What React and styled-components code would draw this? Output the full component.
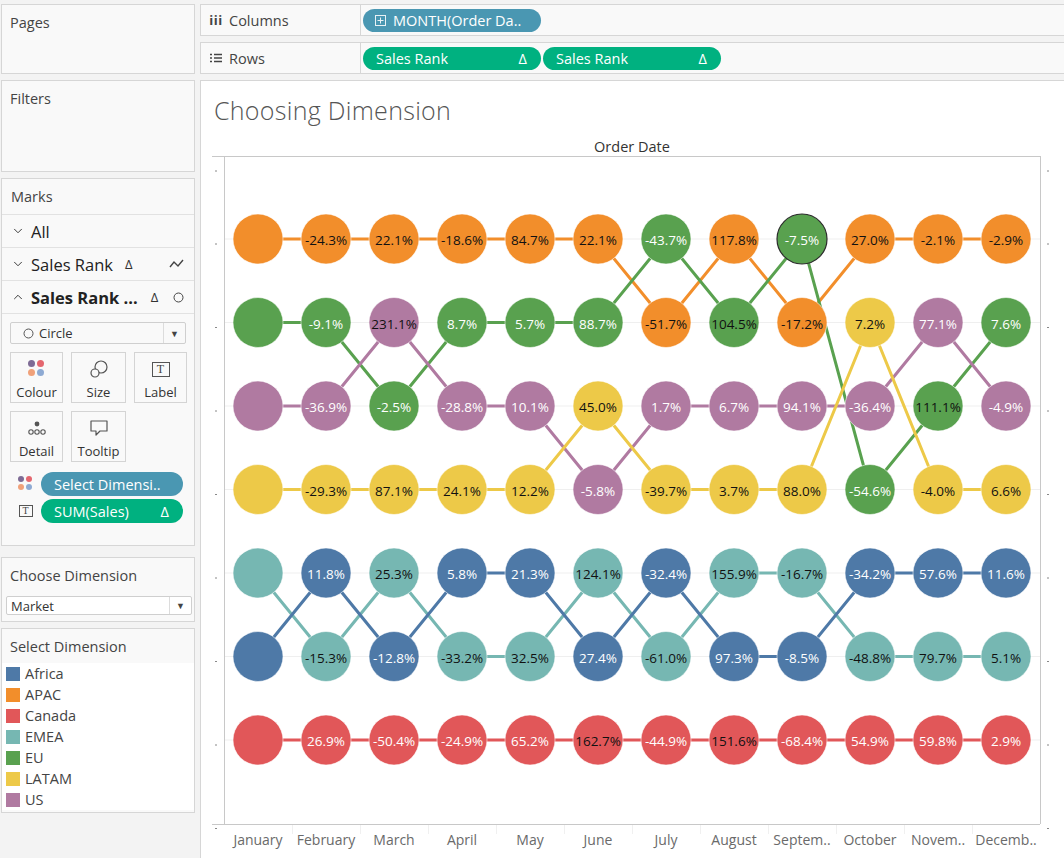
import React from "react"
import styled, { createGlobalStyle } from "styled-components"
import { ChevronDown, ChevronUp } from "lucide-react"

const GlobalStyle = createGlobalStyle`
  html, body {
    margin: 0;
    padding: 0;
    overflow: hidden;
    background: #f3f3f3;
  }
  body {
    font-family: "Open Sans", "Liberation Sans", sans-serif;
    color: #333;
  }
`;

const COLORS = {
  A: "#4e79a7", // Africa
  P: "#f28e2b", // APAC
  C: "#e15759", // Canada
  E: "#76b7b2", // EMEA
  U: "#59a14f", // EU
  L: "#edc948", // LATAM
  S: "#b07aa1", // US
};

const LEGEND = [
  ["Africa", "A"], ["APAC", "P"], ["Canada", "C"], ["EMEA", "E"],
  ["EU", "U"], ["LATAM", "L"], ["US", "S"],
];

const MONTHS = ["January", "February", "March", "April", "May", "June", "July",
  "August", "Septem..", "October", "Novem..", "Decemb.."];

// market per rank row, month by month
const RANKS = [
  "PPPPPPUPUPPP",
  "UUSUUUPUPLSU",
  "SSUSSLSSSSUS",
  "LLLLLSLLLULL",
  "EAEAAEAEEAAA",
  "AEAEEAEAAEEE",
  "CCCCCCCCCCCC",
];

const LABELS = [
  [null, -24.3, 22.1, -18.6, 84.7, 22.1, -43.7, 117.8, -7.5, 27.0, -2.1, -2.9],
  [null, -9.1, 231.1, 8.7, 5.7, 88.7, -51.7, 104.5, -17.2, 7.2, 77.1, 7.6],
  [null, -36.9, -2.5, -28.8, 10.1, 45.0, 1.7, 6.7, 94.1, -36.4, 111.1, -4.9],
  [null, -29.3, 87.1, 24.1, 12.2, -5.8, -39.7, 3.7, 88.0, -54.6, -4.0, 6.6],
  [null, 11.8, 25.3, 5.8, 21.3, 124.1, -32.4, 155.9, -16.7, -34.2, 57.6, 11.6],
  [null, -15.3, -12.8, -33.2, 32.5, 27.4, -61.0, 97.3, -8.5, -48.8, 79.7, 5.1],
  [null, 26.9, -50.4, -24.9, 65.2, 162.7, -44.9, 151.6, -68.4, 54.9, 59.8, 2.9],
];

const COL0 = 46;
const COLW = 68;
const ROW0 = 109;
const ROWH = 83.5;
const R = 25;

const Page = styled.div`
  display: flex;
  padding-top: 4px;
  height: 880px;
  box-sizing: border-box;
`;

const Sidebar = styled.div`
  width: 194px;
  margin-left: 1px;
  display: flex;
  flex-direction: column;
`;

const Card = styled.div`
  background: #f9f9f9;
  border: 1px solid #d6d6d6;
  box-sizing: border-box;
  height: ${p => p.$h}px;
  margin-top: ${p => p.$mt || 0}px;
`;

const CardTitle = styled.div`
  font-size: 14.5px;
  color: #444;
  padding: ${p => p.$pad || "7px 8px"};
`;

const MarksHeader = styled.div`
  font-size: 14.5px;
  color: #444;
  height: 35px;
  line-height: 35px;
  padding-left: 9px;
`;

const MarksRow = styled.div`
  display: flex;
  align-items: center;
  height: 33px;
  border-top: 1px solid #e2e2e2;
  box-sizing: border-box;
  padding: 0 10px 0 9px;
  color: #222;
`;

const RowLabel = styled.span`
  font-size: 16.5px;
  margin-left: 6px;
  font-weight: ${p => (p.$bold ? 700 : 400)};
  white-space: nowrap;
`;

const Delta = styled.span`
  font-size: 13px;
  margin-left: ${p => p.$ml}px;
  color: #333;
`;

const RowIcon = styled.span`
  margin-left: auto;
  display: flex;
  align-items: center;
`;

const MarksBody = styled.div`
  border-top: 1px solid #e2e2e2;
  padding: 8px 8px 0 8px;
`;

const Select = styled.div`
  display: flex;
  align-items: center;
  height: ${p => p.$h || 22}px;
  background: ${p => p.$bg || "#f9f9f9"};
  border: 1px solid #cfcfcf;
  border-radius: 2px;
  box-sizing: border-box;
  font-size: 13px;
  color: #333;
`;

const SelectText = styled.span`
  flex: 1;
  display: flex;
  align-items: center;
  gap: 5px;
  padding-left: ${p => p.$pl || 12}px;
`;

const SelectArrow = styled.span`
  width: 21px;
  align-self: stretch;
  border-left: 1px solid #dcdcdc;
  display: flex;
  align-items: center;
  justify-content: center;
  font-size: 9px;
  color: #444;
`;

const ButtonGrid = styled.div`
  display: grid;
  grid-template-columns: 53px 55px 53px;
  grid-auto-rows: 51px;
  gap: 8px;
  margin-top: 8px;
`;

const MarkButton = styled.div`
  border: 1px solid #d4d4d4;
  background: #f9f9f9;
  display: flex;
  flex-direction: column;
  align-items: center;
  justify-content: flex-end;
  padding-bottom: 1px;
  box-sizing: border-box;
  font-size: 13px;
  color: #333;
`;

const ButtonIcon = styled.div`
  height: 24px;
  display: flex;
  align-items: center;
  justify-content: center;
  margin-bottom: 2px;
`;

const LabelGlyph = styled.span`
  display: inline-flex;
  align-items: center;
  justify-content: center;
  width: ${p => p.$w || 16}px;
  height: ${p => p.$hh || 13}px;
  border: 1px solid #555;
  font-family: "Liberation Serif", serif;
  font-size: ${p => p.$fs || 11}px;
  color: #444;
  box-sizing: border-box;
  line-height: 1;
`;

const PillRow = styled.div`
  display: flex;
  align-items: center;
  margin-top: ${p => p.$mt}px;
`;

const PillIcon = styled.span`
  width: 31px;
  display: flex;
  justify-content: center;
`;

const Pill = styled.div`
  display: flex;
  align-items: center;
  height: ${p => p.$h || 24}px;
  width: ${p => p.$w}px;
  border-radius: 12px;
  background: ${p => (p.$kind === "blue" ? "#4a97b2" : "#00b180")};
  color: #fff;
  font-size: 14.5px;
  padding: 0 ${p => p.$pr || 12}px 0 ${p => p.$pl || 13}px;
  box-sizing: border-box;
  white-space: nowrap;
`;

const PillText = styled.span`
  flex: 1;
  overflow: hidden;
`;

const LegendList = styled.div`
  background: #fff;
`;

const LegendItem = styled.div`
  display: flex;
  align-items: center;
  height: 21px;
  padding-left: 4px;
  font-size: 14.5px;
  color: #444;
`;

const Swatch = styled.span`
  width: 14px;
  height: 14px;
  background: ${p => p.$c};
  margin-right: 5px;
`;

const Main = styled.div`
  flex: 1;
  margin-left: 5px;
  margin-right: -3px;
  display: flex;
  flex-direction: column;
  gap: 6px;
  min-width: 0;
`;

const Shelf = styled.div`
  display: flex;
  height: 32px;
  border: 1px solid #d6d6d6;
  background: #f9f9f9;
  box-sizing: border-box;
`;

const ShelfLabel = styled.div`
  width: 160px;
  border-right: 1px solid #d6d6d6;
  display: flex;
  align-items: center;
  padding-left: 9px;
  box-sizing: border-box;
  font-size: 14.5px;
  color: #444;
  gap: 7px;
`;

const ShelfIcon = styled.span`
  width: 12px;
  display: flex;
  justify-content: center;
  font-weight: 700;
  font-size: 13px;
  letter-spacing: 0.5px;
  color: #444;
`;

const ShelfPills = styled.div`
  display: flex;
  align-items: center;
  gap: 2px;
  padding-left: 2px;
`;

const ChartCard = styled.div`
  flex: 1;
  background: #fff;
  border: 1px solid #d6d6d6;
  padding: 13px 0 0 11px;
  overflow: hidden;
`;

const Title = styled.div`
  font-size: 25px;
  font-weight: 300;
  color: #555;
  line-height: 32px;
  padding-left: 2px;
  letter-spacing: 0.3px;
`;

const ChartSvg = styled.svg`
  display: block;
  margin-top: 4px;
  font-family: "Open Sans", "Liberation Sans", sans-serif;
`;

function ColourDots({ size = 7, gap = 2 }) {
  const s = size + gap;
  const c = ["#7e6b95", "#e4676f", "#f0a17a", "#8eaad3"];
  return (
    <svg width={s * 2} height={s * 2}>
      {c.map((col, i) => (
        <circle key={i} cx={size / 2 + (i % 2) * s} cy={size / 2 + Math.floor(i / 2) * s} r={size / 2} fill={col} />
      ))}
    </svg>
  );
}

function Chart() {
  const pos = {};
  RANKS.forEach((row, r) => {
    row.split("").forEach((m, c) => {
      pos[m] = pos[m] || [];
      pos[m][c] = r;
    });
  });
  const cx = c => COL0 + c * COLW;
  const cy = r => ROW0 + r * ROWH;
  const ticks = [41];
  for (let k = 0; k < 8; k++) ticks.push(114 + k * ROWH);

  return (
    <ChartSvg width="852" height="728">
      <text x="420" y="16" textAnchor="middle" dominantBaseline="central" fontSize="14.5" fill="#333">Order Date</text>
      {RANKS.map((_, r) => (
        <line key={"g" + r} x1="12" x2="828" y1={cy(r)} y2={cy(r)} stroke="#efefef" strokeWidth="1" />
      ))}
      <line x1="0" x2="828" y1="26.5" y2="26.5" stroke="#c8c8c8" />
      <line x1="12.5" x2="12.5" y1="26" y2="694" stroke="#c8c8c8" />
      <line x1="828.5" x2="828.5" y1="26" y2="694" stroke="#c8c8c8" />
      <line x1="0" x2="828" y1="694.5" y2="694.5" stroke="#c8c8c8" />
      {MONTHS.slice(1).map((_, k) => (
        <line key={"s" + k} x1={12.5 + (k + 1) * COLW} x2={12.5 + (k + 1) * COLW} y1="695" y2="704" stroke="#f0f0f0" />
      ))}
      {ticks.map((t, i) => (
        <g key={"t" + i}>
          <line x1="3" x2="5" y1={t} y2={t} stroke="#888" />
          <line x1="835" x2="837" y1={t} y2={t} stroke="#888" />
        </g>
      ))}
      {Object.keys(pos).map(m => (
        <polyline
          key={"l" + m}
          points={pos[m].map((r, c) => `${cx(c)},${cy(r)}`).join(" ")}
          fill="none"
          stroke={COLORS[m]}
          strokeWidth="3"
        />
      ))}
      {RANKS.map((row, r) =>
        row.split("").map((m, c) => {
          const v = LABELS[r][c];
          const dark = "PLE".includes(m) || (v !== null && Math.abs(v) >= 100);
          const selected = r === 0 && c === 8;
          return (
            <g key={r + "-" + c}>
              <circle
                cx={cx(c)}
                cy={cy(r)}
                r={R}
                fill={COLORS[m]}
                stroke={selected ? "#2b2b2b" : "rgba(255,255,255,0.55)"}
                strokeWidth={selected ? 1.2 : 1}
              />
              {v !== null && (
                <text
                  x={cx(c)}
                  y={cy(r) + 1}
                  textAnchor="middle"
                  dominantBaseline="central"
                  fontSize="13.5"
                  fill={dark ? "#111" : "#fff"}
                >
                  {v.toFixed(1)}%
                </text>
              )}
            </g>
          );
        })
      )}
      {MONTHS.map((m, c) => (
        <text key={m} x={cx(c)} y="709" textAnchor="middle" dominantBaseline="central" fontSize="14" fill="#6a6a6a">
          {m}
        </text>
      ))}
    </ChartSvg>
  );
}

export default function App() {
  return (
    <>
      <GlobalStyle />
      <Page>
        <Sidebar>
          <Card $h={70}>
            <CardTitle $pad="8px 8px">Pages</CardTitle>
          </Card>
          <Card $h={92} $mt={6}>
            <CardTitle $pad="8px 8px">Filters</CardTitle>
          </Card>
          <Card $h={368} $mt={6}>
            <MarksHeader>Marks</MarksHeader>
            <MarksRow>
              <ChevronDown size={14} strokeWidth={1.5} />
              <RowLabel>All</RowLabel>
            </MarksRow>
            <MarksRow>
              <ChevronDown size={14} strokeWidth={1.5} />
              <RowLabel>Sales Rank</RowLabel>
              <Delta $ml={12}>Δ</Delta>
              <RowIcon>
                <svg width="15" height="10" viewBox="0 0 15 10">
                  <polyline points="1,8 5,3 9,7 14,1" fill="none" stroke="#444" strokeWidth="1.4" />
                </svg>
              </RowIcon>
            </MarksRow>
            <MarksRow>
              <ChevronUp size={14} strokeWidth={1.5} />
              <RowLabel $bold>Sales Rank ...</RowLabel>
              <Delta $ml={13}>Δ</Delta>
              <RowIcon>
                <svg width="11" height="11">
                  <circle cx="5.5" cy="5.5" r="4.5" fill="none" stroke="#444" strokeWidth="1" />
                </svg>
              </RowIcon>
            </MarksRow>
            <MarksBody>
              <Select>
                <SelectText>
                  <svg width="11" height="11">
                    <circle cx="5.5" cy="5.5" r="4.5" fill="none" stroke="#555" strokeWidth="1" />
                  </svg>
                  Circle
                </SelectText>
                <SelectArrow>▼</SelectArrow>
              </Select>
              <ButtonGrid>
                <MarkButton>
                  <ButtonIcon><ColourDots /></ButtonIcon>
                  Colour
                </MarkButton>
                <MarkButton>
                  <ButtonIcon>
                    <svg width="20" height="20">
                      <circle cx="12" cy="8" r="6" fill="none" stroke="#555" strokeWidth="1.2" />
                      <circle cx="6" cy="14" r="4" fill="#f9f9f9" stroke="#555" strokeWidth="1.2" />
                    </svg>
                  </ButtonIcon>
                  Size
                </MarkButton>
                <MarkButton>
                  <ButtonIcon><LabelGlyph $w={18} $hh={15} $fs={12}>T</LabelGlyph></ButtonIcon>
                  Label
                </MarkButton>
                <MarkButton>
                  <ButtonIcon>
                    <svg width="20" height="16">
                      <circle cx="10" cy="4" r="2.4" fill="#555" />
                      <circle cx="4" cy="12" r="2.2" fill="none" stroke="#555" strokeWidth="1.1" />
                      <circle cx="10" cy="12" r="2.2" fill="none" stroke="#555" strokeWidth="1.1" />
                      <circle cx="16" cy="12" r="2.2" fill="none" stroke="#555" strokeWidth="1.1" />
                    </svg>
                  </ButtonIcon>
                  Detail
                </MarkButton>
                <MarkButton>
                  <ButtonIcon>
                    <svg width="20" height="18">
                      <path d="M2 2 H18 V12 H11 L7 16 V12 H2 Z" fill="none" stroke="#555" strokeWidth="1.2" strokeLinejoin="round" />
                    </svg>
                  </ButtonIcon>
                  Tooltip
                </MarkButton>
              </ButtonGrid>
              <PillRow $mt={10}>
                <PillIcon><ColourDots size={6} gap={2} /></PillIcon>
                <Pill $kind="blue" $w={142}>
                  <PillText>Select Dimensi..</PillText>
                </Pill>
              </PillRow>
              <PillRow $mt={3}>
                <PillIcon><LabelGlyph $w={14} $hh={12} $fs={10}>T</LabelGlyph></PillIcon>
                <Pill $kind="green" $w={142} $pr={14}>
                  <PillText>SUM(Sales)</PillText>
                  <span>Δ</span>
                </Pill>
              </PillRow>
            </MarksBody>
          </Card>
          <Card $h={65} $mt={11}>
            <CardTitle $pad="8px 8px 11px">Choose Dimension</CardTitle>
            <Select $h={19} $bg="#fff" style={{ margin: "0 2px 0 4px" }}>
              <SelectText $pl={4}>Market</SelectText>
              <SelectArrow>▼</SelectArrow>
            </Select>
          </Card>
          <Card $h={185} $mt={6}>
            <CardTitle $pad="8px 8px 7px">Select Dimension</CardTitle>
            <LegendList>
              {LEGEND.map(([name, k]) => (
                <LegendItem key={k}>
                  <Swatch $c={COLORS[k]} />
                  {name}
                </LegendItem>
              ))}
            </LegendList>
          </Card>
        </Sidebar>
        <Main>
          <Shelf>
            <ShelfLabel>
              <ShelfIcon>iii</ShelfIcon>
              Columns
            </ShelfLabel>
            <ShelfPills>
              <Pill $kind="blue" $w={178} $h={23} $pl={12}>
                <svg width="11" height="11" style={{ marginRight: 7 }}>
                  <rect x="0.5" y="0.5" width="10" height="10" fill="none" stroke="#e8f1f5" strokeWidth="1" />
                  <path d="M5.5 2.5 V8.5 M2.5 5.5 H8.5" stroke="#e8f1f5" strokeWidth="1" />
                </svg>
                <PillText>MONTH(Order Da..</PillText>
              </Pill>
            </ShelfPills>
          </Shelf>
          <Shelf>
            <ShelfLabel>
              <ShelfIcon>
                <svg width="12" height="10">
                  <path d="M0 1.5 H2 M4 1.5 H12 M0 5 H2 M4 5 H12 M0 8.5 H2 M4 8.5 H12" stroke="#444" strokeWidth="1.4" />
                </svg>
              </ShelfIcon>
              Rows
            </ShelfLabel>
            <ShelfPills>
              <Pill $kind="green" $w={178} $h={23} $pr={14}>
                <PillText>Sales Rank</PillText>
                <span>Δ</span>
              </Pill>
              <Pill $kind="green" $w={178} $h={23} $pr={14}>
                <PillText>Sales Rank</PillText>
                <span>Δ</span>
              </Pill>
            </ShelfPills>
          </Shelf>
          <ChartCard>
            <Title>Choosing Dimension</Title>
            <Chart />
          </ChartCard>
        </Main>
      </Page>
    </>
  );
}
